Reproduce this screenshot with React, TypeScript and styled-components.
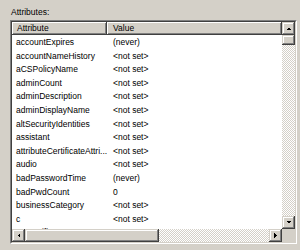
import React from 'react';
import styled, { createGlobalStyle } from 'styled-components';

const Global = createGlobalStyle`
  html, body { margin: 0; padding: 0; background: #d4d0c8; }
  body {
    font-family: "Liberation Sans", Arial, sans-serif;
    font-size: 8.5px;
    color: #000;
  }
`;

const Page = styled.div`
  width: 300px;
  height: 250px;
  box-sizing: border-box;
  padding: 6px 0 0 10px;
  background: #d4d0c8;
  display: flex;
  flex-direction: column;
`;

const Label = styled.div`
  line-height: 12px;
  height: 12px;
  padding-left: 1px;
  margin-bottom: 2px;
`;

const ListBox = styled.div`
  width: 287px;
  height: 224px;
  box-sizing: border-box;
  border-style: solid;
  border-width: 1px;
  border-color: #808080 #ffffff #ffffff #808080;
  display: flex;
`;

const ListInner = styled.div`
  flex: 1;
  border-style: solid;
  border-width: 1px;
  border-color: #404040 #d4d0c8 #d4d0c8 #404040;
  background: #fff;
  display: grid;
  grid-template-columns: 1fr 13px;
  grid-template-rows: 1fr 13px;
  overflow: hidden;
`;

const Content = styled.div`
  overflow: hidden;
  display: flex;
  flex-direction: column;
  min-width: 0;
  min-height: 0;
`;

const HeaderRow = styled.div`
  display: grid;
  grid-template-columns: 95px 1fr;
  height: 13px;
  flex: none;
`;

const HeaderCell = styled.div<{ $pad: number }>`
  background: #d4d0c8;
  box-shadow: inset -1px -1px #404040, inset 1px 1px #fff, inset -2px -2px #808080;
  line-height: 13px;
  padding-left: ${(p) => p.$pad}px;
  white-space: nowrap;
  overflow: hidden;
`;

const Rows = styled.div`
  padding-top: 1px;
`;

const Row = styled.div`
  display: grid;
  grid-template-columns: 95px 1fr;
  height: 13.6px;
  line-height: 13.6px;
  white-space: nowrap;
`;

const Cell = styled.div<{ $pad: number }>`
  padding-left: ${(p) => p.$pad}px;
  overflow: hidden;
`;

const VScroll = styled.div`
  display: flex;
  flex-direction: column;
  min-height: 0;
`;

const HScroll = styled.div`
  display: flex;
  flex-direction: row;
  min-width: 0;
`;

const Track = styled.div`
  flex: 1;
  background-color: #fff;
  background-image: repeating-conic-gradient(#d4d0c8 0 25%, #ffffff 0 50%);
  background-size: 2px 2px;
`;

const ScrollButton = styled.div<{ $len?: number; $vertical?: boolean }>`
  flex: none;
  width: ${(p) => (p.$vertical ? '13px' : p.$len ? `${p.$len}px` : '13px')};
  height: ${(p) => (p.$vertical ? (p.$len ? `${p.$len}px` : '13px') : '13px')};
  box-sizing: border-box;
  background: #d4d0c8;
  box-shadow: inset -1px -1px #404040, inset 1px 1px #d4d0c8, inset -2px -2px #808080, inset 2px 2px #fff;
  display: flex;
  align-items: center;
  justify-content: center;
`;

const Corner = styled.div`
  background: #d4d0c8;
`;

type Dir = 'up' | 'down' | 'left' | 'right';

const Arrow: React.FC<{ dir: Dir }> = ({ dir }) => {
  const pts: Record<Dir, string> = {
    up: '0,3 5,3 2.5,0.5',
    down: '0,0 5,0 2.5,2.5',
    left: '3,0 3,5 0.5,2.5',
    right: '0,0 0,5 2.5,2.5',
  };
  const vert = dir === 'up' || dir === 'down';
  return (
    <svg width={vert ? 5 : 3} height={vert ? 3 : 5} viewBox={vert ? '0 0 5 3' : '0 0 3 5'} shapeRendering="crispEdges">
      <polygon points={pts[dir]} fill="#000" />
    </svg>
  );
};

const data: [string, string][] = [
  ['accountExpires', '(never)'],
  ['accountNameHistory', '<not set>'],
  ['aCSPolicyName', '<not set>'],
  ['adminCount', '<not set>'],
  ['adminDescription', '<not set>'],
  ['adminDisplayName', '<not set>'],
  ['altSecurityIdentities', '<not set>'],
  ['assistant', '<not set>'],
  ['attributeCertificateAttri...', '<not set>'],
  ['audio', '<not set>'],
  ['badPasswordTime', '(never)'],
  ['badPwdCount', '0'],
  ['businessCategory', '<not set>'],
  ['c', '<not set>'],
  ['cACertificate', '<not set>'],
];

export default function App() {
  return (
    <Page>
      <Global />
      <Label>Attributes:</Label>
      <ListBox>
        <ListInner>
          <Content>
            <HeaderRow>
              <HeaderCell $pad={5}>Attribute</HeaderCell>
              <HeaderCell $pad={6}>Value</HeaderCell>
            </HeaderRow>
            <Rows>
              {data.map(([a, v]) => (
                <Row key={a}>
                  <Cell $pad={4}>{a}</Cell>
                  <Cell $pad={6}>{v}</Cell>
                </Row>
              ))}
            </Rows>
          </Content>
          <VScroll>
            <ScrollButton $vertical>
              <Arrow dir="up" />
            </ScrollButton>
            <ScrollButton $vertical $len={10} />
            <Track />
            <ScrollButton $vertical>
              <Arrow dir="down" />
            </ScrollButton>
          </VScroll>
          <HScroll>
            <ScrollButton>
              <Arrow dir="left" />
            </ScrollButton>
            <ScrollButton $len={134} />
            <Track />
            <ScrollButton>
              <Arrow dir="right" />
            </ScrollButton>
          </HScroll>
          <Corner />
        </ListInner>
      </ListBox>
    </Page>
  );
}
